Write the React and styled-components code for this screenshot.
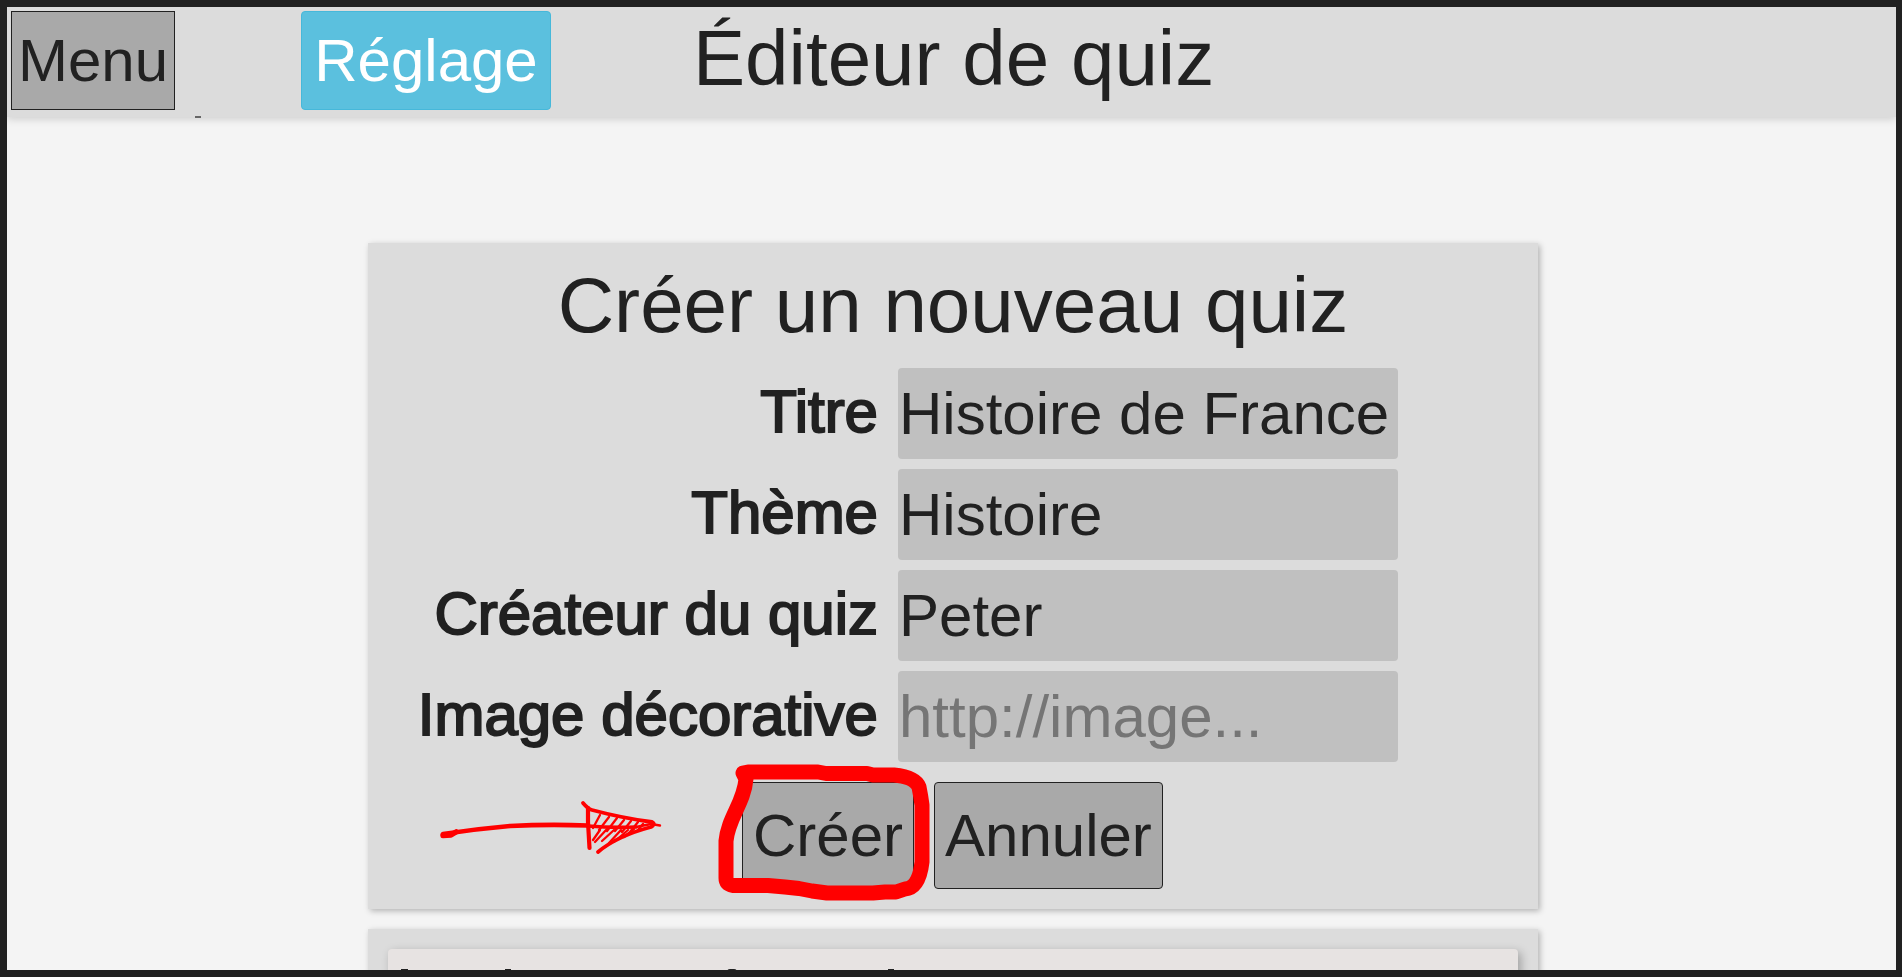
import React from "react";
import styled, { createGlobalStyle, css } from "styled-components";

const Global = createGlobalStyle`
  * { box-sizing: border-box; }
  body { margin: 0; }
`;

const ink = "#212121";

const Frame = styled.div`
  width: 1902px;
  height: 977px;
  border: 7px solid ${ink};
  border-right-width: 6px;
  overflow: hidden;
  background: #f4f4f4;
  color: ${ink};
  font-family: "Liberation Sans", Arial, sans-serif;
  font-size: 60px;
`;

const Header = styled.header`
  display: flex;
  align-items: flex-start;
  height: 110px;
  padding: 4px;
  background: #dcdcdc;
  box-shadow: 0 2px 8px rgba(0, 0, 0, 0.16);
`;

const Button = styled.button`
  font: inherit;
  line-height: 1;
  color: ${ink};
  height: 107px;
  padding: 0 10px;
  border: 1px solid ${ink};
  border-radius: 4px;
  background: #a9a9a9;
`;

const MenuButton = styled(Button)`
  width: 164px;
  height: 99px;
  padding: 0;
  border-radius: 0;
`;

const SettingsButton = styled(Button)`
  width: 250px;
  height: 99px;
  margin-left: 126px;
  padding: 0;
  color: #fff;
  background: #5bc0de;
  border-color: #46b8da;
`;

const headingText = css`
  margin: 0;
  font-size: 78.15px;
  font-weight: 400;
  line-height: 90px;
  white-space: nowrap;
`;

const PageTitle = styled.h1`
  ${headingText}
  margin: 2px 0 0 142px;
`;

const MarkerLine = styled.div`
  width: 6px;
  height: 2px;
  margin: -1px 0 0 188px;
  position: relative;
  background: #666;
`;

const Content = styled.main`
  display: flex;
  flex-direction: column;
  gap: 20px;
  width: 1170px;
  margin: 125px 0 0 361px;
`;

const Card = styled.section`
  background: #dcdcdc;
  box-shadow: 2px 2px 6px rgba(0, 0, 0, 0.27);
`;

const FormCard = styled(Card)`
  height: 666px;
  padding-top: 17px;
`;

const FormTitle = styled.h2`
  ${headingText}
  text-align: center;
`;

const Fields = styled.div`
  display: flex;
  flex-direction: column;
  gap: 10px;
  margin-top: 18px;
`;

const Field = styled.label`
  display: grid;
  grid-template-columns: 510px 500px;
  column-gap: 20px;
  height: 91px;
`;

const FieldName = styled.span`
  text-align: right;
  white-space: nowrap;
  line-height: 87px;
  -webkit-text-stroke: 2px ${ink};
`;

const Input = styled.input`
  width: 500px;
  height: 91px;
  padding: 0 1px;
  border: 0;
  border-radius: 4px;
  outline: 0;
  background: #c0c0c0;
  color: ${ink};
  font: inherit;
  &::placeholder { color: #757575; opacity: 1; }
`;

const Actions = styled.div`
  display: flex;
  gap: 20px;
  margin: 20px 0 0 374px;
`;

const Highlighted = styled.div`
  position: relative;
  display: flex;
`;

const Scribble = styled.svg`
  position: absolute;
  left: ${(p) => p.$left}px;
  top: ${(p) => p.$top}px;
  pointer-events: none;
  fill: none;
  stroke: #f00;
  stroke-linecap: round;
  stroke-linejoin: round;
`;

const ListCard = styled(Card)`
  padding: 20px;
`;

const ListItem = styled.div`
  display: flex;
  height: 120px;
  padding: 20px 13px;
  border-radius: 4px;
  background: #e7e3e2;
  box-shadow: 3px 3px 10px rgba(0, 0, 0, 0.27);
`;

const Stem = styled.span`
  width: ${(p) => p.$width}px;
  height: 43px;
  margin-right: ${(p) => p.$after}px;
  border-radius: ${(p) => (p.$round ? "3px 3px 0 0" : "0")};
  background: ${ink};
`;

const fields = [
  { name: "Titre", value: "Histoire de France" },
  { name: "Thème", value: "Histoire" },
  { name: "Créateur du quiz", value: "Peter" },
  { name: "Image décorative", placeholder: "http://image..." },
];

function Circle() {
  return (
    <Scribble $left={-32} $top={-26} width="230" height="150" viewBox="710 756 230 150" strokeWidth="15">
      <path d="M743 773 L748 772 H818 L826 773.5 H867 L873 775 H894 Q915 777 919 787 Q921 797 922 805 V862 Q919 888 905 889 L896 892 H885 L873 893 H827 L812 891 L799 888.5 L785 887 L768 885.5 H733 Q726 884 726 878 V841 C728 818 744 803 746 779 Z" />
    </Scribble>
  );
}

function Arrow() {
  return (
    <Scribble $left={-322} $top={-12} width="260" height="100" viewBox="420 770 260 100" strokeWidth="3">
      <path strokeWidth="5.5" d="M443 835.5 L451 835 L456 832" />
      <path strokeWidth="4.6" d="M443 834 Q476 829 510 826 Q548 824 588 825.5" />
      <path strokeWidth="3.6" d="M588 826 Q612 828 636 827" />
      <path strokeWidth="2.4" d="M636 827 L651 824 L660 825.5" />
      <path strokeWidth="3.8" d="M583 803 Q588 809 592 810 Q622 818 652 822 Q656 824 651 827 Q617 836 598 852" />
      <path strokeWidth="4.2" d="M588 808 L588 822 L589.5 848" />
      <path strokeWidth="2.3" d="M600 815 L593 828 M609 817 L599 830 M617 818 L607 831 M624 820 L615 831 M631 821 L622 832 M638 822 L630 832 M643 824 L638 830 M600 830 L593 840 M607 829 L595 842 M614 830 L602 841 M621 830 L609 843 M628 830 L614 842 M634 829 L624 837" />
    </Scribble>
  );
}

export default function App() {
  return (
    <Frame>
      <Global />
      <Header>
        <MenuButton>Menu</MenuButton>
        <SettingsButton>Réglage</SettingsButton>
        <PageTitle>Éditeur de quiz</PageTitle>
      </Header>
      <MarkerLine />
      <Content>
        <FormCard>
          <FormTitle>Créer un nouveau quiz</FormTitle>
          <Fields>
            {fields.map((f) => (
              <Field key={f.name}>
                <FieldName>{f.name}</FieldName>
                <Input defaultValue={f.value} placeholder={f.placeholder} />
              </Field>
            ))}
          </Fields>
          <Actions>
            <Highlighted>
              <Button>Créer</Button>
              <Circle />
              <Arrow />
            </Highlighted>
            <Button>Annuler</Button>
          </Actions>
        </FormCard>
        <ListCard>
          <ListItem>
            <Stem $width={7} $after={97} />
            <Stem $width={6} $after={216} />
            <Stem $width={10} $after={151} $round />
            <Stem $width={6} $after={0} />
          </ListItem>
        </ListCard>
      </Content>
    </Frame>
  );
}
